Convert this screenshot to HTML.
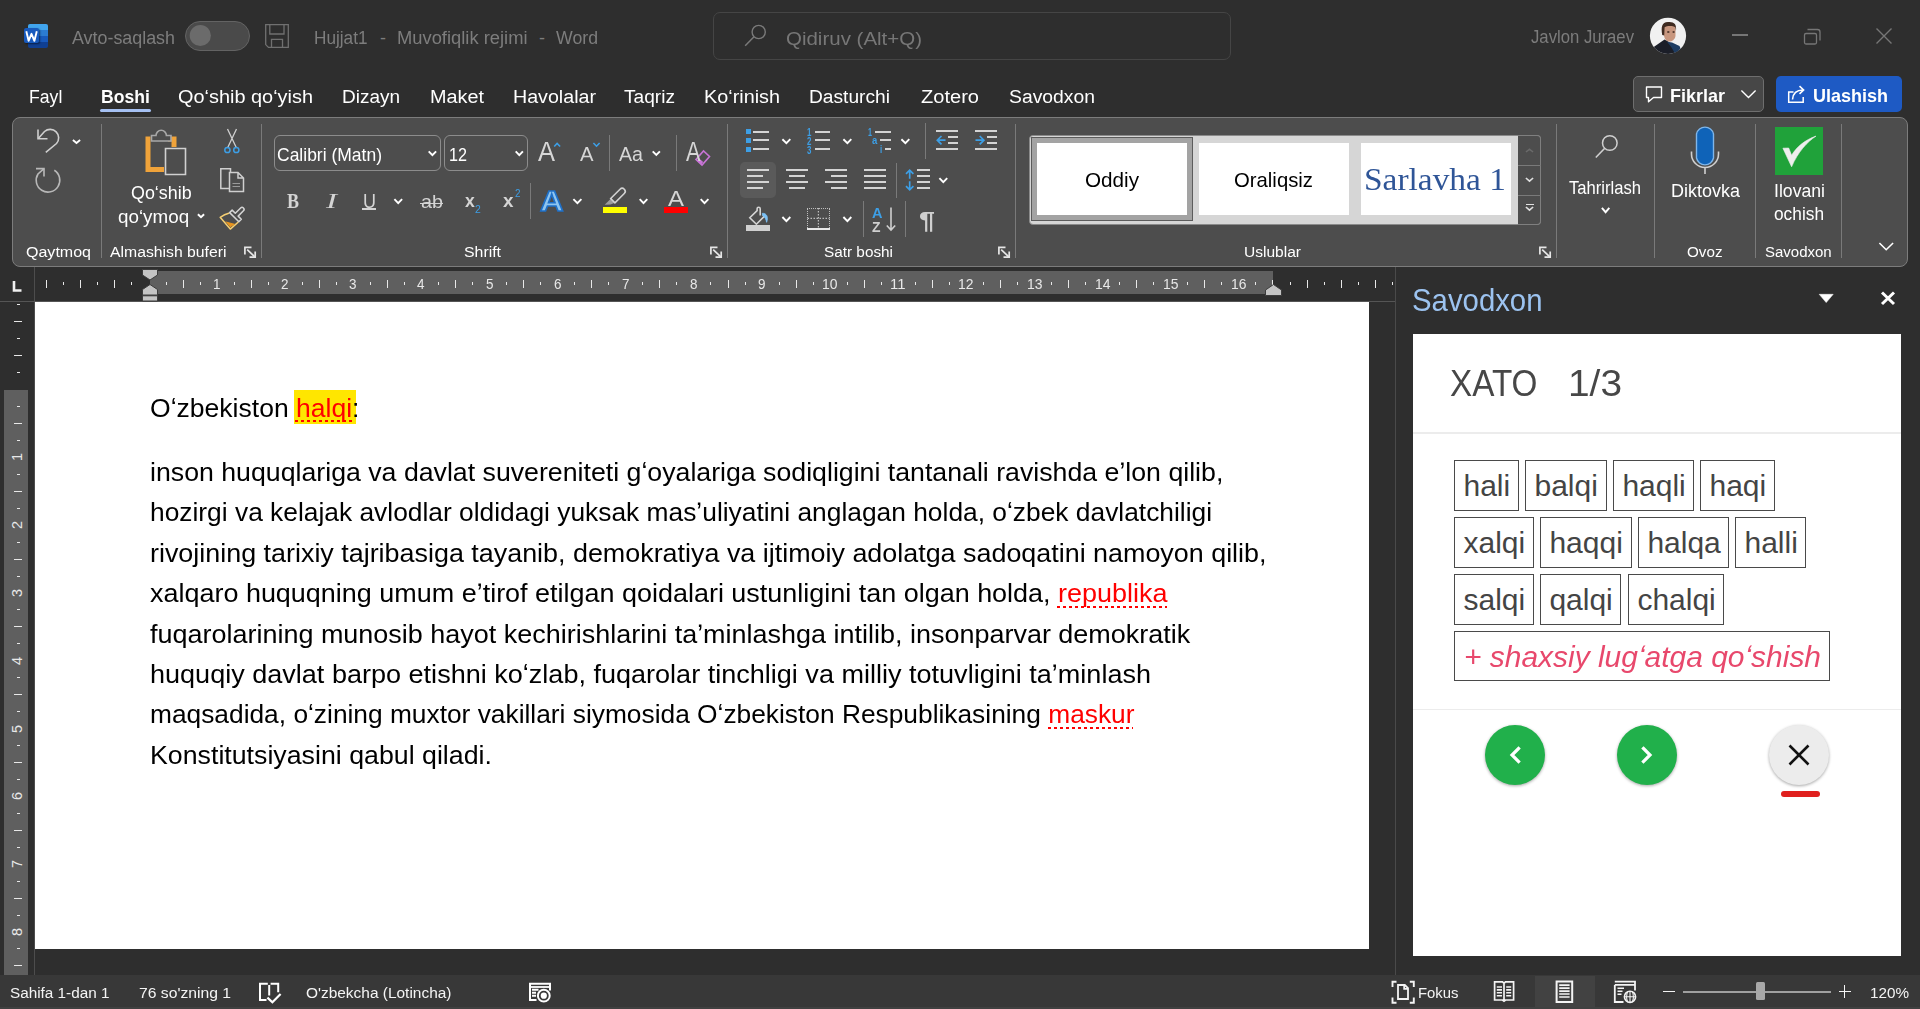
<!DOCTYPE html><html><head><meta charset="utf-8"><style>
html,body{margin:0;padding:0;width:1920px;height:1009px;overflow:hidden;background:#2e2e2e;font-family:"Liberation Sans",sans-serif;}
.a{position:absolute;box-sizing:border-box;}
.t{position:absolute;white-space:nowrap;line-height:1;transform-origin:0 0;}
svg{position:absolute;overflow:visible;}
</style></head><body>
<div class="a" style="left:100px;top:109px;width:51px;height:3px;background:#a5c0f2;border-radius:2px;"></div>
<div class="a" style="left:1633px;top:76px;width:131px;height:36px;background:#474747;border:1px solid #6e6e6e;border-radius:5px;"></div>
<div class="a" style="left:1776px;top:76px;width:126px;height:36px;background:#1e5ac4;border-radius:5px;"></div>
<div class="a" style="left:12px;top:117px;width:1896px;height:150px;background:#4d4d4d;border:1px solid #7c7c7c;border-radius:8px;"></div>
<div class="a" style="left:35px;top:270px;width:1360px;height:24px;background:#2e2e2e;"></div>
<div class="a" style="left:150px;top:271px;width:1123px;height:23px;background:#5f5f5f;"></div>
<div class="a" style="left:34px;top:267px;width:1px;height:35px;background:#4d4d4d;"></div>
<div class="a" style="left:0px;top:301px;width:1395px;height:1px;background:#555;"></div>
<div class="a" style="left:1395px;top:267px;width:1px;height:708px;background:#4a4a4a;"></div>
<div class="a" style="left:4px;top:390px;width:24px;height:585px;background:#5f5f5f;"></div>
<div class="a" style="left:34px;top:302px;width:1px;height:673px;background:#4d4d4d;"></div>
<div class="a" style="left:35px;top:302px;width:1334px;height:647px;background:#ffffff;"></div>
<div class="a" style="left:294px;top:390px;width:62px;height:34px;background:#ffe600;"></div>
<div class="a" style="left:295px;top:419.5px;width:58px;height:2.5px;background:repeating-linear-gradient(90deg,#f00 0 3px,transparent 3px 6px);"></div>
<div class="a" style="left:1057px;top:605.5px;width:110px;height:2.5px;background:repeating-linear-gradient(90deg,#f00 0 3px,transparent 3px 6px);"></div>
<div class="a" style="left:1047.5px;top:726.5px;width:85.5px;height:2.5px;background:repeating-linear-gradient(90deg,#f00 0 3px,transparent 3px 6px);"></div>
<div class="a" style="left:1413px;top:334px;width:488px;height:622px;background:#ffffff;"></div>
<div class="a" style="left:0px;top:975px;width:1920px;height:34px;background:#383838;"></div>
<div class="a" style="left:0px;top:1007px;width:1920px;height:2px;background:#414141;"></div>
<div class="a" style="left:101px;top:124px;width:1px;height:134px;background:#7a7a7a;"></div>
<div class="a" style="left:261px;top:124px;width:1px;height:134px;background:#7a7a7a;"></div>
<div class="a" style="left:727px;top:124px;width:1px;height:134px;background:#7a7a7a;"></div>
<div class="a" style="left:1015px;top:124px;width:1px;height:134px;background:#7a7a7a;"></div>
<div class="a" style="left:1556px;top:124px;width:1px;height:134px;background:#7a7a7a;"></div>
<div class="a" style="left:1654px;top:124px;width:1px;height:134px;background:#7a7a7a;"></div>
<div class="a" style="left:1755px;top:124px;width:1px;height:134px;background:#7a7a7a;"></div>
<div class="a" style="left:1841px;top:124px;width:1px;height:134px;background:#7a7a7a;"></div>
<div class="a" style="left:274px;top:135px;width:167px;height:36px;border:1px solid #8c8c8c;border-radius:6px;"></div>
<div class="a" style="left:444px;top:135px;width:84px;height:36px;border:1px solid #8c8c8c;border-radius:6px;"></div>
<div class="a" style="left:609px;top:135px;width:1px;height:36px;background:#7a7a7a;"></div>
<div class="a" style="left:676px;top:135px;width:1px;height:36px;background:#7a7a7a;"></div>
<div class="a" style="left:690px;top:140px;width:30px;height:30px;"></div>
<div class="a" style="left:362px;top:208.3px;width:14px;height:2px;background:#d4d4d4;"></div>
<div class="a" style="left:419.5px;top:202.5px;width:23.5px;height:1.6px;background:#d4d4d4;"></div>
<div class="a" style="left:530px;top:183px;width:1px;height:36px;background:#7a7a7a;"></div>
<div class="a" style="left:602.8px;top:206.6px;width:24.5px;height:6.3px;background:#ffff00;"></div>
<div class="a" style="left:664px;top:206.6px;width:24px;height:6.3px;background:#ff0000;"></div>
<div class="a" style="left:746px;top:129.0px;width:5px;height:5px;background:#3d9fe6;"></div>
<div class="a" style="left:753.2px;top:130.5px;width:15.6px;height:2px;background:#d4d4d4;"></div>
<div class="a" style="left:746px;top:137.8px;width:5px;height:5px;background:#3d9fe6;"></div>
<div class="a" style="left:753.2px;top:139.3px;width:15.6px;height:2px;background:#d4d4d4;"></div>
<div class="a" style="left:746px;top:146.8px;width:5px;height:5px;background:#3d9fe6;"></div>
<div class="a" style="left:753.2px;top:148.3px;width:15.6px;height:2px;background:#d4d4d4;"></div>
<div class="a" style="left:814.5px;top:130.5px;width:15.3px;height:2px;background:#d4d4d4;"></div>
<div class="a" style="left:814.5px;top:139.3px;width:15.3px;height:2px;background:#d4d4d4;"></div>
<div class="a" style="left:814.5px;top:148.3px;width:15.3px;height:2px;background:#d4d4d4;"></div>
<div class="a" style="left:875.3px;top:130.5px;width:15.5px;height:2px;background:#d4d4d4;"></div>
<div class="a" style="left:880px;top:139.3px;width:10.8px;height:2px;background:#d4d4d4;"></div>
<div class="a" style="left:884.5px;top:148.3px;width:6.3px;height:2px;background:#d4d4d4;"></div>
<div class="a" style="left:925px;top:123px;width:1px;height:36px;background:#7a7a7a;"></div>
<div class="a" style="left:936.3px;top:130px;width:21.5px;height:2px;background:#d4d4d4;"></div>
<div class="a" style="left:947.9px;top:136px;width:9.899999999999977px;height:2px;background:#d4d4d4;"></div>
<div class="a" style="left:947.9px;top:142px;width:9.899999999999977px;height:2px;background:#d4d4d4;"></div>
<div class="a" style="left:936.3px;top:148px;width:21.5px;height:2px;background:#d4d4d4;"></div>
<div class="a" style="left:975.2px;top:130px;width:21.59999999999991px;height:2px;background:#d4d4d4;"></div>
<div class="a" style="left:987.3px;top:136px;width:9.5px;height:2px;background:#d4d4d4;"></div>
<div class="a" style="left:987.3px;top:142px;width:9.5px;height:2px;background:#d4d4d4;"></div>
<div class="a" style="left:975.2px;top:148px;width:21.59999999999991px;height:2px;background:#d4d4d4;"></div>
<div class="a" style="left:740px;top:162px;width:35.5px;height:36px;background:#5a5a5a;border-radius:5px;"></div>
<div class="a" style="left:747.1px;top:169.1px;width:21.699999999999932px;height:2px;background:#d4d4d4;"></div>
<div class="a" style="left:747.1px;top:175.1px;width:15.600000000000023px;height:2px;background:#d4d4d4;"></div>
<div class="a" style="left:747.1px;top:181.1px;width:21.699999999999932px;height:2px;background:#d4d4d4;"></div>
<div class="a" style="left:747.1px;top:187.1px;width:15.600000000000023px;height:2px;background:#d4d4d4;"></div>
<div class="a" style="left:786px;top:169.1px;width:21.600000000000023px;height:2px;background:#d4d4d4;"></div>
<div class="a" style="left:789.3px;top:175.1px;width:15.400000000000091px;height:2px;background:#d4d4d4;"></div>
<div class="a" style="left:786px;top:181.1px;width:21.600000000000023px;height:2px;background:#d4d4d4;"></div>
<div class="a" style="left:789.3px;top:187.1px;width:15.400000000000091px;height:2px;background:#d4d4d4;"></div>
<div class="a" style="left:825.1px;top:169.1px;width:21.799999999999955px;height:2px;background:#d4d4d4;"></div>
<div class="a" style="left:831.3px;top:175.1px;width:15.600000000000023px;height:2px;background:#d4d4d4;"></div>
<div class="a" style="left:825.1px;top:181.1px;width:21.799999999999955px;height:2px;background:#d4d4d4;"></div>
<div class="a" style="left:831.3px;top:187.1px;width:15.600000000000023px;height:2px;background:#d4d4d4;"></div>
<div class="a" style="left:864.1px;top:169.1px;width:21.799999999999955px;height:2px;background:#d4d4d4;"></div>
<div class="a" style="left:864.1px;top:175.1px;width:21.799999999999955px;height:2px;background:#d4d4d4;"></div>
<div class="a" style="left:864.1px;top:181.1px;width:21.799999999999955px;height:2px;background:#d4d4d4;"></div>
<div class="a" style="left:864.1px;top:187.1px;width:21.799999999999955px;height:2px;background:#d4d4d4;"></div>
<div class="a" style="left:896px;top:162.5px;width:1px;height:35.5px;background:#7a7a7a;"></div>
<div class="a" style="left:916.6px;top:169.1px;width:13.399999999999977px;height:2px;background:#d4d4d4;"></div>
<div class="a" style="left:916.6px;top:175.1px;width:13.399999999999977px;height:2px;background:#d4d4d4;"></div>
<div class="a" style="left:916.6px;top:181.1px;width:13.399999999999977px;height:2px;background:#d4d4d4;"></div>
<div class="a" style="left:916.6px;top:187.1px;width:13.399999999999977px;height:2px;background:#d4d4d4;"></div>
<div class="a" style="left:746px;top:225.3px;width:24px;height:5.3px;background:#d0d0d0;"></div>
<div class="a" style="left:807px;top:207.5px;width:22.8px;height:22px;border:1.2px dotted #bdbdbd;border-bottom:none;"></div>
<div class="a" style="left:806.9px;top:228px;width:23px;height:2px;background:#e8e8e8;"></div>
<div class="a" style="left:862.5px;top:201px;width:1px;height:36px;background:#7a7a7a;"></div>
<div class="a" style="left:905px;top:201px;width:1px;height:36px;background:#7a7a7a;"></div>
<div class="a" style="left:1029px;top:134.5px;width:512px;height:90.5px;background:#d6d6d6;border:1px solid #8a8a8a;border-radius:4px;"></div>
<div class="a" style="left:1518px;top:135px;width:23px;height:90px;background:#4d4d4d;border:1px solid #7f7f7f;border-left:none;border-radius:0 4px 4px 0;"></div>
<div class="a" style="left:1518px;top:165px;width:23px;height:1px;background:#7a7a7a;"></div>
<div class="a" style="left:1518px;top:194.5px;width:23px;height:1px;background:#7a7a7a;"></div>
<div class="a" style="left:1525.5px;top:203.5px;width:8.5px;height:1.6px;background:#e0e0e0;"></div>
<div class="a" style="left:1031px;top:137px;width:161.5px;height:83.5px;background:#ffffff;border:1px solid #5c5c5c;box-shadow:inset 0 0 0 5px #a3a3a3;"></div>
<div class="a" style="left:1199px;top:143px;width:150px;height:72px;background:#ffffff;"></div>
<div class="a" style="left:1361px;top:143px;width:150.3px;height:72px;background:#ffffff;"></div>
<div class="a" style="left:1775px;top:127px;width:48px;height:48px;background:#20a23a;"></div>
<div class="a" style="left:28.4px;top:23.9px;width:19.6px;height:23.9px;border-radius:2px;background:linear-gradient(#41a5ee 0,#41a5ee 25%,#2b7cd3 25%,#2b7cd3 51%,#185abd 51%,#185abd 76%,#103f91 76%);"></div>
<div class="a" style="left:24.1px;top:28.4px;width:15px;height:15.1px;background:#185abd;border-radius:2px;box-shadow:1px 1px 2px rgba(0,0,0,.5);"></div>
<div class="a" style="left:185px;top:21px;width:65px;height:30px;background:#4a4a4a;border:1.5px solid #636363;border-radius:15px;"></div>
<div class="a" style="left:713px;top:12px;width:518px;height:48px;border:1px solid #454545;border-radius:7px;background:#2e2e2e;"></div>
<div class="a" style="left:1732px;top:34.3px;width:15.6px;height:1.4px;background:#767676;"></div>
<div class="a" style="left:46px;top:279.5px;width:1.2px;height:8px;background:#e8e8e8;"></div>
<div class="a" style="left:63px;top:281.5px;width:1.2px;height:3.5px;background:#e8e8e8;"></div>
<div class="a" style="left:80px;top:279.5px;width:1.2px;height:8px;background:#e8e8e8;"></div>
<div class="a" style="left:97px;top:281.5px;width:1.2px;height:3.5px;background:#e8e8e8;"></div>
<div class="a" style="left:114px;top:279.5px;width:1.2px;height:8px;background:#e8e8e8;"></div>
<div class="a" style="left:131px;top:281.5px;width:1.2px;height:3.5px;background:#e8e8e8;"></div>
<div class="a" style="left:166px;top:281.5px;width:1.2px;height:3.5px;background:#e8e8e8;"></div>
<div class="a" style="left:183px;top:279.5px;width:1.2px;height:8px;background:#e8e8e8;"></div>
<div class="a" style="left:200px;top:281.5px;width:1.2px;height:3.5px;background:#e8e8e8;"></div>
<div class="a" style="left:234px;top:281.5px;width:1.2px;height:3.5px;background:#e8e8e8;"></div>
<div class="a" style="left:251px;top:279.5px;width:1.2px;height:8px;background:#e8e8e8;"></div>
<div class="a" style="left:268px;top:281.5px;width:1.2px;height:3.5px;background:#e8e8e8;"></div>
<div class="a" style="left:302px;top:281.5px;width:1.2px;height:3.5px;background:#e8e8e8;"></div>
<div class="a" style="left:319px;top:279.5px;width:1.2px;height:8px;background:#e8e8e8;"></div>
<div class="a" style="left:336px;top:281.5px;width:1.2px;height:3.5px;background:#e8e8e8;"></div>
<div class="a" style="left:370px;top:281.5px;width:1.2px;height:3.5px;background:#e8e8e8;"></div>
<div class="a" style="left:387px;top:279.5px;width:1.2px;height:8px;background:#e8e8e8;"></div>
<div class="a" style="left:404px;top:281.5px;width:1.2px;height:3.5px;background:#e8e8e8;"></div>
<div class="a" style="left:438px;top:281.5px;width:1.2px;height:3.5px;background:#e8e8e8;"></div>
<div class="a" style="left:455px;top:279.5px;width:1.2px;height:8px;background:#e8e8e8;"></div>
<div class="a" style="left:472px;top:281.5px;width:1.2px;height:3.5px;background:#e8e8e8;"></div>
<div class="a" style="left:506px;top:281.5px;width:1.2px;height:3.5px;background:#e8e8e8;"></div>
<div class="a" style="left:523px;top:279.5px;width:1.2px;height:8px;background:#e8e8e8;"></div>
<div class="a" style="left:540px;top:281.5px;width:1.2px;height:3.5px;background:#e8e8e8;"></div>
<div class="a" style="left:574px;top:281.5px;width:1.2px;height:3.5px;background:#e8e8e8;"></div>
<div class="a" style="left:591px;top:279.5px;width:1.2px;height:8px;background:#e8e8e8;"></div>
<div class="a" style="left:608px;top:281.5px;width:1.2px;height:3.5px;background:#e8e8e8;"></div>
<div class="a" style="left:642px;top:281.5px;width:1.2px;height:3.5px;background:#e8e8e8;"></div>
<div class="a" style="left:659px;top:279.5px;width:1.2px;height:8px;background:#e8e8e8;"></div>
<div class="a" style="left:676px;top:281.5px;width:1.2px;height:3.5px;background:#e8e8e8;"></div>
<div class="a" style="left:710px;top:281.5px;width:1.2px;height:3.5px;background:#e8e8e8;"></div>
<div class="a" style="left:728px;top:279.5px;width:1.2px;height:8px;background:#e8e8e8;"></div>
<div class="a" style="left:745px;top:281.5px;width:1.2px;height:3.5px;background:#e8e8e8;"></div>
<div class="a" style="left:779px;top:281.5px;width:1.2px;height:3.5px;background:#e8e8e8;"></div>
<div class="a" style="left:796px;top:279.5px;width:1.2px;height:8px;background:#e8e8e8;"></div>
<div class="a" style="left:813px;top:281.5px;width:1.2px;height:3.5px;background:#e8e8e8;"></div>
<div class="a" style="left:847px;top:281.5px;width:1.2px;height:3.5px;background:#e8e8e8;"></div>
<div class="a" style="left:864px;top:279.5px;width:1.2px;height:8px;background:#e8e8e8;"></div>
<div class="a" style="left:881px;top:281.5px;width:1.2px;height:3.5px;background:#e8e8e8;"></div>
<div class="a" style="left:915px;top:281.5px;width:1.2px;height:3.5px;background:#e8e8e8;"></div>
<div class="a" style="left:932px;top:279.5px;width:1.2px;height:8px;background:#e8e8e8;"></div>
<div class="a" style="left:949px;top:281.5px;width:1.2px;height:3.5px;background:#e8e8e8;"></div>
<div class="a" style="left:983px;top:281.5px;width:1.2px;height:3.5px;background:#e8e8e8;"></div>
<div class="a" style="left:1000px;top:279.5px;width:1.2px;height:8px;background:#e8e8e8;"></div>
<div class="a" style="left:1017px;top:281.5px;width:1.2px;height:3.5px;background:#e8e8e8;"></div>
<div class="a" style="left:1051px;top:281.5px;width:1.2px;height:3.5px;background:#e8e8e8;"></div>
<div class="a" style="left:1068px;top:279.5px;width:1.2px;height:8px;background:#e8e8e8;"></div>
<div class="a" style="left:1085px;top:281.5px;width:1.2px;height:3.5px;background:#e8e8e8;"></div>
<div class="a" style="left:1119px;top:281.5px;width:1.2px;height:3.5px;background:#e8e8e8;"></div>
<div class="a" style="left:1136px;top:279.5px;width:1.2px;height:8px;background:#e8e8e8;"></div>
<div class="a" style="left:1153px;top:281.5px;width:1.2px;height:3.5px;background:#e8e8e8;"></div>
<div class="a" style="left:1187px;top:281.5px;width:1.2px;height:3.5px;background:#e8e8e8;"></div>
<div class="a" style="left:1204px;top:279.5px;width:1.2px;height:8px;background:#e8e8e8;"></div>
<div class="a" style="left:1221px;top:281.5px;width:1.2px;height:3.5px;background:#e8e8e8;"></div>
<div class="a" style="left:1255px;top:281.5px;width:1.2px;height:3.5px;background:#e8e8e8;"></div>
<div class="a" style="left:1272px;top:279.5px;width:1.2px;height:8px;background:#e8e8e8;"></div>
<div class="a" style="left:1290px;top:281.5px;width:1.2px;height:3.5px;background:#e8e8e8;"></div>
<div class="a" style="left:1307px;top:279.5px;width:1.2px;height:8px;background:#e8e8e8;"></div>
<div class="a" style="left:1324px;top:281.5px;width:1.2px;height:3.5px;background:#e8e8e8;"></div>
<div class="a" style="left:1341px;top:279.5px;width:1.2px;height:8px;background:#e8e8e8;"></div>
<div class="a" style="left:1358px;top:281.5px;width:1.2px;height:3.5px;background:#e8e8e8;"></div>
<div class="a" style="left:1375px;top:279.5px;width:1.2px;height:8px;background:#e8e8e8;"></div>
<div class="a" style="left:1392px;top:281.5px;width:1.2px;height:3.5px;background:#e8e8e8;"></div>
<div class="a" style="left:16.8px;top:304px;width:3.5px;height:1.2px;background:#e8e8e8;"></div>
<div class="a" style="left:14px;top:321px;width:8px;height:1.2px;background:#e8e8e8;"></div>
<div class="a" style="left:16.8px;top:338px;width:3.5px;height:1.2px;background:#e8e8e8;"></div>
<div class="a" style="left:14px;top:355px;width:8px;height:1.2px;background:#e8e8e8;"></div>
<div class="a" style="left:16.8px;top:372px;width:3.5px;height:1.2px;background:#e8e8e8;"></div>
<div class="a" style="left:16.8px;top:406px;width:3.5px;height:1.2px;background:#e8e8e8;"></div>
<div class="a" style="left:14px;top:423px;width:8px;height:1.2px;background:#e8e8e8;"></div>
<div class="a" style="left:16.8px;top:440px;width:3.5px;height:1.2px;background:#e8e8e8;"></div>
<div class="t" style="left:10px;top:450.4px;width:14px;height:14px;font-size:14.5px;color:#e8e8e8;line-height:14px;text-align:center;transform:rotate(-90deg);transform-origin:7px 7px;">1</div>
<div class="a" style="left:16.8px;top:474px;width:3.5px;height:1.2px;background:#e8e8e8;"></div>
<div class="a" style="left:14px;top:491px;width:8px;height:1.2px;background:#e8e8e8;"></div>
<div class="a" style="left:16.8px;top:508px;width:3.5px;height:1.2px;background:#e8e8e8;"></div>
<div class="t" style="left:10px;top:518.2px;width:14px;height:14px;font-size:14.5px;color:#e8e8e8;line-height:14px;text-align:center;transform:rotate(-90deg);transform-origin:7px 7px;">2</div>
<div class="a" style="left:16.8px;top:542px;width:3.5px;height:1.2px;background:#e8e8e8;"></div>
<div class="a" style="left:14px;top:559px;width:8px;height:1.2px;background:#e8e8e8;"></div>
<div class="a" style="left:16.8px;top:576px;width:3.5px;height:1.2px;background:#e8e8e8;"></div>
<div class="t" style="left:10px;top:586.0px;width:14px;height:14px;font-size:14.5px;color:#e8e8e8;line-height:14px;text-align:center;transform:rotate(-90deg);transform-origin:7px 7px;">3</div>
<div class="a" style="left:16.8px;top:609px;width:3.5px;height:1.2px;background:#e8e8e8;"></div>
<div class="a" style="left:14px;top:626px;width:8px;height:1.2px;background:#e8e8e8;"></div>
<div class="a" style="left:16.8px;top:643px;width:3.5px;height:1.2px;background:#e8e8e8;"></div>
<div class="t" style="left:10px;top:653.8px;width:14px;height:14px;font-size:14.5px;color:#e8e8e8;line-height:14px;text-align:center;transform:rotate(-90deg);transform-origin:7px 7px;">4</div>
<div class="a" style="left:16.8px;top:677px;width:3.5px;height:1.2px;background:#e8e8e8;"></div>
<div class="a" style="left:14px;top:694px;width:8px;height:1.2px;background:#e8e8e8;"></div>
<div class="a" style="left:16.8px;top:711px;width:3.5px;height:1.2px;background:#e8e8e8;"></div>
<div class="t" style="left:10px;top:721.6px;width:14px;height:14px;font-size:14.5px;color:#e8e8e8;line-height:14px;text-align:center;transform:rotate(-90deg);transform-origin:7px 7px;">5</div>
<div class="a" style="left:16.8px;top:745px;width:3.5px;height:1.2px;background:#e8e8e8;"></div>
<div class="a" style="left:14px;top:762px;width:8px;height:1.2px;background:#e8e8e8;"></div>
<div class="a" style="left:16.8px;top:779px;width:3.5px;height:1.2px;background:#e8e8e8;"></div>
<div class="t" style="left:10px;top:789.4px;width:14px;height:14px;font-size:14.5px;color:#e8e8e8;line-height:14px;text-align:center;transform:rotate(-90deg);transform-origin:7px 7px;">6</div>
<div class="a" style="left:16.8px;top:813px;width:3.5px;height:1.2px;background:#e8e8e8;"></div>
<div class="a" style="left:14px;top:830px;width:8px;height:1.2px;background:#e8e8e8;"></div>
<div class="a" style="left:16.8px;top:847px;width:3.5px;height:1.2px;background:#e8e8e8;"></div>
<div class="t" style="left:10px;top:857.2px;width:14px;height:14px;font-size:14.5px;color:#e8e8e8;line-height:14px;text-align:center;transform:rotate(-90deg);transform-origin:7px 7px;">7</div>
<div class="a" style="left:16.8px;top:881px;width:3.5px;height:1.2px;background:#e8e8e8;"></div>
<div class="a" style="left:14px;top:898px;width:8px;height:1.2px;background:#e8e8e8;"></div>
<div class="a" style="left:16.8px;top:915px;width:3.5px;height:1.2px;background:#e8e8e8;"></div>
<div class="t" style="left:10px;top:925.0px;width:14px;height:14px;font-size:14.5px;color:#e8e8e8;line-height:14px;text-align:center;transform:rotate(-90deg);transform-origin:7px 7px;">8</div>
<div class="a" style="left:16.8px;top:948px;width:3.5px;height:1.2px;background:#e8e8e8;"></div>
<div class="a" style="left:14px;top:965px;width:8px;height:1.2px;background:#e8e8e8;"></div>
<div class="a" style="left:1413px;top:432px;width:488px;height:1.5px;background:#ececec;"></div>
<div class="a" style="left:1454.2px;top:460.2px;width:64.59999999999991px;height:50.5px;border:1.2px solid #4a4a4a;background:#fff;"></div>
<div class="a" style="left:1525.2px;top:460.2px;width:81.59999999999991px;height:50.5px;border:1.2px solid #4a4a4a;background:#fff;"></div>
<div class="a" style="left:1613.1px;top:460.2px;width:80.5px;height:50.5px;border:1.2px solid #4a4a4a;background:#fff;"></div>
<div class="a" style="left:1700.2px;top:460.2px;width:74.39999999999986px;height:50.5px;border:1.2px solid #4a4a4a;background:#fff;"></div>
<div class="a" style="left:1454.2px;top:517.1px;width:79.5px;height:50.5px;border:1.2px solid #4a4a4a;background:#fff;"></div>
<div class="a" style="left:1540.1px;top:517.1px;width:91.60000000000014px;height:50.5px;border:1.2px solid #4a4a4a;background:#fff;"></div>
<div class="a" style="left:1638.1px;top:517.1px;width:90.70000000000005px;height:50.5px;border:1.2px solid #4a4a4a;background:#fff;"></div>
<div class="a" style="left:1735.2px;top:517.1px;width:70.5px;height:50.5px;border:1.2px solid #4a4a4a;background:#fff;"></div>
<div class="a" style="left:1454.2px;top:574px;width:79.5px;height:50.5px;border:1.2px solid #4a4a4a;background:#fff;"></div>
<div class="a" style="left:1540.1px;top:574px;width:81.30000000000018px;height:50.5px;border:1.2px solid #4a4a4a;background:#fff;"></div>
<div class="a" style="left:1628.1px;top:574px;width:95.70000000000005px;height:50.5px;border:1.2px solid #4a4a4a;background:#fff;"></div>
<div class="a" style="left:1454.2px;top:631.2px;width:375.8px;height:50.3px;border:1.2px solid #4a4a4a;background:#fff;"></div>
<div class="a" style="left:1413px;top:708.5px;width:488px;height:1.5px;background:#ececec;"></div>
<div class="a" style="left:1781.3px;top:791.3px;width:39px;height:5.3px;background:#e0201e;border-radius:3px;"></div>
<div class="a" style="left:1535px;top:976px;width:60px;height:31px;background:#424242;"></div>
<div class="a" style="left:1662.8px;top:991px;width:12px;height:1.4px;background:#f4f4f4;"></div>
<div class="a" style="left:1683.3px;top:990.6px;width:147.7px;height:2.1px;background:#a0a0a0;"></div>
<div class="a" style="left:1756.2px;top:982.4px;width:9.2px;height:17.8px;background:#a8a8a8;border-radius:1.5px;"></div>
<div class="a" style="left:1838.5px;top:991px;width:12.3px;height:1.4px;background:#f4f4f4;"></div>
<div class="a" style="left:1843.95px;top:985.4px;width:1.4px;height:12.3px;background:#f4f4f4;"></div><svg style="left:0;top:0" width="1920" height="1009" viewBox="0 0 1920 1009"><path d="M244.9,254.5 V247.4 H251.5" stroke="#e6e6e6" stroke-width="1.7" fill="none" /><path d="M247.2,249.7 L254.8,256.8" stroke="#e6e6e6" stroke-width="1.7" fill="none" /><path d="M249.5,257.1 H255.2 V251.5" stroke="#e6e6e6" stroke-width="1.7" fill="none" /><path d="M710.9,254.5 V247.4 H717.5" stroke="#e6e6e6" stroke-width="1.7" fill="none" /><path d="M713.2,249.7 L720.8,256.8" stroke="#e6e6e6" stroke-width="1.7" fill="none" /><path d="M715.5,257.1 H721.2 V251.5" stroke="#e6e6e6" stroke-width="1.7" fill="none" /><path d="M998.9,254.5 V247.4 H1005.5" stroke="#e6e6e6" stroke-width="1.7" fill="none" /><path d="M1001.2,249.7 L1008.8,256.8" stroke="#e6e6e6" stroke-width="1.7" fill="none" /><path d="M1003.5,257.1 H1009.2 V251.5" stroke="#e6e6e6" stroke-width="1.7" fill="none" /><path d="M1539.9,254.5 V247.4 H1546.5" stroke="#e6e6e6" stroke-width="1.7" fill="none" /><path d="M1542.2,249.7 L1549.8,256.8" stroke="#e6e6e6" stroke-width="1.7" fill="none" /><path d="M1544.5,257.1 H1550.2 V251.5" stroke="#e6e6e6" stroke-width="1.7" fill="none" /><path d="M1879.4,243.0 L1886.2,249.7 L1893.1,243.0" stroke="#ffffff" stroke-width="1.6" fill="none" stroke-linecap="butt" stroke-linejoin="miter"/><path d="M38,129.5 V138.7 H47.5" stroke="#cfcfcf" stroke-width="1.6" fill="none" /><path d="M38.5,138.2 L44.5,131.5 A8.5,8.5 0 0 1 56.5,143.5 L45.8,152.4" stroke="#cfcfcf" stroke-width="1.6" fill="none" /><path d="M72.9,140.0 L76.5,143.0 L80.1,140.0" stroke="#ffffff" stroke-width="1.9" fill="none" stroke-linecap="butt" stroke-linejoin="miter"/><path d="M54.3,170.3 A11.8,11.8 0 1 1 38,174 L44,168.6" stroke="#b8b8b8" stroke-width="1.6" fill="none" /><path d="M36,168.6 H44 V176.6" stroke="#b8b8b8" stroke-width="1.6" fill="none" /><path d="M150.5,139 H148 V169.5 H164" stroke="#f0a33a" stroke-width="5" fill="none" /><path d="M168,139 H174 V147" stroke="#f0a33a" stroke-width="5" fill="none" /><path d="M151.5,141 V135.5 H156 A5.2,5.2 0 0 1 166.4,135.5 H171 V141 Z" stroke="#a8a8a8" stroke-width="1.6" fill="#4d4d4d" /><path d="M165.5,148.5 H185.5 V174.5 H165.5 Z" stroke="#d0d0d0" stroke-width="1.6" fill="none" /><path d="M197.9,214.2 L201.0,217.2 L204.1,214.2" stroke="#ffffff" stroke-width="1.9" fill="none" stroke-linecap="butt" stroke-linejoin="miter"/><path d="M227.5,129 L236.5,148 M236.5,129 L227.5,148" stroke="#cfcfcf" stroke-width="1.3" fill="none" /><circle cx="227.4" cy="150" r="2.6" stroke="#3d9fe6" stroke-width="1.5" fill="none"/><circle cx="236.3" cy="150" r="2.6" stroke="#3d9fe6" stroke-width="1.5" fill="none"/><path d="M230.5,172 V168.8 H220.8 V188.5 H229" stroke="#cfcfcf" stroke-width="1.5" fill="none" /><path d="M229.5,172.5 H238 L243.5,178 V191.5 H229.5 Z M238,172.5 V178 H243.5" stroke="#cfcfcf" stroke-width="1.5" fill="none" /><path d="M232.5,183.5 H240 M232.5,186.5 H240" stroke="#9a9a9a" stroke-width="1.2" fill="none" /><g transform="translate(234.25,217.2) rotate(45)"><path d="M-6.3,0.5 Q-9,5 -9.9,10 L5.6,11.2 L6.3,0.5" stroke="#f5cf73" stroke-width="1.5" fill="none" stroke-linejoin="round"/><path d="M-1.9,8.9 L4.9,5.1 L3.9,9.5 Z" fill="#e8951f" stroke="#e8951f" stroke-width="1"/><path d="M-6.5,0 H6.5 V-3.5 H2 V-11 A2,2 0 0 0 -2,-11 V-3.5 H-6.5 Z" stroke="#d4d4d4" stroke-width="1.5" fill="none" stroke-linejoin="round"/></g><path d="M428.7,151.3 L432.4,155.2 L436.1,151.3" stroke="#ffffff" stroke-width="1.9" fill="none" stroke-linecap="butt" stroke-linejoin="miter"/><path d="M515.7,151.3 L519.3,155.2 L522.9,151.3" stroke="#ffffff" stroke-width="1.9" fill="none" stroke-linecap="butt" stroke-linejoin="miter"/><path d="M554.2,146.5 L557.1,143.4 L560.1,146.5" stroke="#3d9fe6" stroke-width="1.6" fill="none" stroke-linecap="butt" stroke-linejoin="miter"/><path d="M593.4,143.0 L596.5,146.2 L599.6,143.0" stroke="#3d9fe6" stroke-width="1.6" fill="none" stroke-linecap="butt" stroke-linejoin="miter"/><path d="M652.7,151.3 L656.3,155.0 L659.9,151.3" stroke="#ffffff" stroke-width="1.9" fill="none" stroke-linecap="butt" stroke-linejoin="miter"/><path d="M696,159.5 L703.5,151 L709.5,156.5 L702,165 Z" stroke="#c874d6" stroke-width="1.6" fill="#4d4d4d" /><path d="M697.8,159.5 L702.2,163.3" stroke="#c874d6" stroke-width="3.2" fill="none" /><path d="M394.4,199.2 L398.2,203.2 L402.1,199.2" stroke="#ffffff" stroke-width="1.9" fill="none" stroke-linecap="butt" stroke-linejoin="miter"/><path d="M573.4,199.2 L577.4,203.2 L581.4,199.2" stroke="#ffffff" stroke-width="1.9" fill="none" stroke-linecap="butt" stroke-linejoin="miter"/><g transform="translate(616.5,197) rotate(45)"><path d="M-2.9,5.2 L2.9,5.2 L1.2,9.5 L-2.9,13.8 Z" fill="#9c9c9c"/><path d="M-3,5.2 V-8 A3,3 0 0 1 3,-8 V5.2 Z" stroke="#d2d2d2" stroke-width="1.6" fill="none"/></g><path d="M639.7,199.2 L643.5,203.2 L647.3,199.2" stroke="#ffffff" stroke-width="1.9" fill="none" stroke-linecap="butt" stroke-linejoin="miter"/><path d="M700.7,199.2 L704.5,203.2 L708.4,199.2" stroke="#ffffff" stroke-width="1.9" fill="none" stroke-linecap="butt" stroke-linejoin="miter"/><path d="M782.4,139.2 L786.4,143.1 L790.3,139.2" stroke="#ffffff" stroke-width="1.9" fill="none" stroke-linecap="butt" stroke-linejoin="miter"/><path d="M843.4,139.2 L847.4,143.1 L851.3,139.2" stroke="#ffffff" stroke-width="1.9" fill="none" stroke-linecap="butt" stroke-linejoin="miter"/><path d="M901.4,139.2 L905.4,143.1 L909.3,139.2" stroke="#ffffff" stroke-width="1.9" fill="none" stroke-linecap="butt" stroke-linejoin="miter"/><path d="M945.5,140.2 H937.5 M941.5,136 L937.3,140.2 L941.5,144.4" stroke="#3d9fe6" stroke-width="1.7" fill="none" /><path d="M975.5,140.2 H983.7 M979.7,136 L983.9,140.2 L979.7,144.4" stroke="#3d9fe6" stroke-width="1.7" fill="none" /><path d="M909.7,170.5 V178.8 M909.7,181.2 V189.5 M906,173.8 L909.7,170.1 L913.4,173.8 M906,186.2 L909.7,189.9 L913.4,186.2" stroke="#3d9fe6" stroke-width="1.7" fill="none" /><path d="M939.4,178.2 L943.3,182.2 L947.2,178.2" stroke="#ffffff" stroke-width="1.9" fill="none" stroke-linecap="butt" stroke-linejoin="miter"/><path d="M760.2,215.5 V208.8 A1.55,1.55 0 0 0 757.1,208.8 V210.6 L749.8,217.7 L756.4,224.2 L764.2,216.4 L762.8,215" stroke="#d4d4d4" stroke-width="1.6" fill="none" /><path d="M762.3,213.3 C766.8,213 768.6,217.5 766.6,222.3 C766.2,219.2 764.8,216.8 762.6,215.4 Z" stroke="#7cc2f6" stroke-width="0.8" fill="#7cc2f6" /><path d="M782.4,217.0 L786.4,221.1 L790.3,217.0" stroke="#ffffff" stroke-width="1.9" fill="none" stroke-linecap="butt" stroke-linejoin="miter"/><path d="M818.4,208 V228 M807.5,218.3 H829.5" stroke="#bdbdbd" stroke-width="1.2" fill="none" stroke-dasharray="1.5 1.5"/><path d="M843.4,217.0 L847.4,221.1 L851.3,217.0" stroke="#ffffff" stroke-width="1.9" fill="none" stroke-linecap="butt" stroke-linejoin="miter"/><path d="M891,207.5 V230 M886.8,225.5 L891,230 L895.2,225.5" stroke="#cfcfcf" stroke-width="1.6" fill="none" /><path d="M1525.9,152.0 L1529.5,149.3 L1533.1,152.0" stroke="#6a6a6a" stroke-width="1.5" fill="none" stroke-linecap="butt" stroke-linejoin="miter"/><path d="M1525.9,178.0 L1529.5,181.2 L1533.1,178.0" stroke="#e0e0e0" stroke-width="1.6" fill="none" stroke-linecap="butt" stroke-linejoin="miter"/><path d="M1525.9,207.0 L1529.5,210.2 L1533.1,207.0" stroke="#e0e0e0" stroke-width="1.6" fill="none" stroke-linecap="butt" stroke-linejoin="miter"/><circle cx="1609.8" cy="143" r="7.3" stroke="#d0d0d0" stroke-width="1.5" fill="none"/><path d="M1604.5,148.5 L1595.8,157.5" stroke="#d0d0d0" stroke-width="1.6" fill="none" /><path d="M1601.9,207.8 L1605.6,212.2 L1609.3,207.8" stroke="#ffffff" stroke-width="1.9" fill="none" stroke-linecap="butt" stroke-linejoin="miter"/><path d="M1696.5,158 V134 A8.7,8.7 0 0 1 1713.5,134 V158 A8.7,8.7 0 0 1 1696.5,158 Z" stroke="#7fb6ea" stroke-width="1.4" fill="#0f63b8" /><path d="M1691.5,151.5 V154 A13.5,13.5 0 0 0 1718.5,154 V151.5 M1705,167.5 V174" stroke="#d0d0d0" stroke-width="1.6" fill="none" /><path d="M1782.9,148.2 L1788.7,148 L1791.6,155.2 C1797,146.5 1805,140 1816,136.1 C1807,142 1798,152 1791.6,166.8 Z" stroke="#eeeeee" stroke-width="0.6" fill="#eeeeee" /><path d="M26.3,31.3 L28.6,40.8 L31.5,33.8 L34.4,40.8 L36.8,31.3" stroke="#ffffff" stroke-width="1.9" fill="none" stroke-linejoin="round"/><circle cx="200.3" cy="35.5" r="10.6" fill="#6b6b6b"/><path d="M265.7,24.6 H288.3 V47.4 H268.5 L265.7,44.6 Z M269.8,24.6 V34 H284 V24.6 M271.5,47.4 V39.4 H282.5 V47.4" stroke="#707070" stroke-width="1.3" fill="none" /><circle cx="758.7" cy="32" r="6.6" stroke="#7a7a7a" stroke-width="1.4" fill="none"/><path d="M754,36.8 L745.2,45.8" stroke="#7a7a7a" stroke-width="1.5" fill="none" /><defs><clipPath id="av"><circle cx="1668" cy="35.8" r="18.1"/></clipPath></defs><g clip-path="url(#av)"><rect x="1649" y="17" width="38" height="38" fill="#f1f1f1"/><path d="M1664,27 C1664,24.5 1675.5,24 1675.5,27.5 L1675.5,36 C1675,40 1671,42 1668.5,41.5 C1666,41 1664,38 1664,35 Z" fill="#c8977f"/><path d="M1649,57 L1653,47.5 L1664.5,39.5 L1668,41.5 L1672,44.5 L1680,51 L1683,57 Z" fill="#1b1e28"/><path d="M1667,41.8 L1672,42.5 L1679.5,46 L1681.5,51 L1677,57 L1671.5,47.5 Z" fill="#1d3c62"/><path d="M1662.2,35 C1661,27 1661.5,22.5 1668,22 C1674,21.5 1676.8,24 1676,31 L1675.3,27.3 C1673,25.6 1667,25.6 1664.6,27.2 L1664.2,35.5 Z" fill="#3e2a20"/><ellipse cx="1668.3" cy="32" rx="1.3" ry="0.8" fill="#2a1a14"/><ellipse cx="1673.6" cy="32" rx="1.2" ry="0.8" fill="#2a1a14"/></g><path d="M1806,33.5 H1815 A1.5,1.5 0 0 1 1816.5,35 V42.5 A1.5,1.5 0 0 1 1815,44 H1806 A1.5,1.5 0 0 1 1804.5,42.5 V35 A1.5,1.5 0 0 1 1806,33.5 Z" stroke="#767676" stroke-width="1.3" fill="none" /><path d="M1807.5,29.5 H1817.5 A2.5,2.5 0 0 1 1820,32 V40.5" stroke="#767676" stroke-width="1.3" fill="none" /><path d="M1876.5,28.5 L1891.5,43.5 M1891.5,28.5 L1876.5,43.5" stroke="#767676" stroke-width="1.4" fill="none" /><path d="M1646.5,87 H1661.5 V97.5 H1653.5 L1648.5,101.8 V97.5 H1646.5 Z" stroke="#ffffff" stroke-width="1.4" fill="none" stroke-linejoin="round"/><path d="M1741.4,90.5 L1748.5,97.4 L1755.6,90.5" stroke="#ffffff" stroke-width="1.4" fill="none" stroke-linecap="butt" stroke-linejoin="miter"/><path d="M1793.5,92 H1788.7 V102.2 H1803.2 V97" stroke="#ffffff" stroke-width="1.5" fill="none" /><path d="M1792.5,99.5 C1793,93 1796.5,90 1803,90 M1799.5,86.2 L1803.6,90 L1799.5,93.8" stroke="#ffffff" stroke-width="1.6" fill="none" /><path d="M142.5,269.5 H157.5 V275 L150,280 L142.5,275 Z" stroke="#3c3c3c" stroke-width="1" fill="#c4c4c4" /><path d="M150,284.5 L157.5,289.5 V295 H142.5 V289.5 Z" stroke="#3c3c3c" stroke-width="1" fill="#c4c4c4" /><path d="M142.5,295.8 H157.5 V301 H142.5 Z" stroke="#3c3c3c" stroke-width="1" fill="#c4c4c4" /><path d="M1273.5,284.5 L1281.5,290 V295.5 H1265.5 V290 Z" stroke="#3c3c3c" stroke-width="1" fill="#c4c4c4" /><path d="M14,281 V290.5 H21.5" stroke="#f0f0f0" stroke-width="2.6" fill="none" /><path d="M1819.2,294.3 H1833.2 L1826.2,302.6 Z" stroke="#ffffff" stroke-width="0.5" fill="#ffffff" /><path d="M1882,292.5 L1894,304 M1894,292.5 L1882,304" stroke="#ffffff" stroke-width="3" fill="none" /><circle cx="1515" cy="755" r="30" fill="#21b04b" style="filter:drop-shadow(0 1px 1.5px rgba(0,0,0,.35))"/><circle cx="1647" cy="755" r="30" fill="#21b04b" style="filter:drop-shadow(0 1px 1.5px rgba(0,0,0,.35))"/><circle cx="1799" cy="755" r="30" fill="#ececec" style="filter:drop-shadow(0 1px 1.5px rgba(0,0,0,.35))"/><path d="M1518.5,748.5 L1512,755 L1518.5,761.5" stroke="#ffffff" stroke-width="3.2" fill="none" stroke-linecap="square"/><path d="M1643.5,748.5 L1650,755 L1643.5,761.5" stroke="#ffffff" stroke-width="3.2" fill="none" stroke-linecap="square"/><path d="M1789.5,745.5 L1808.5,764.5 M1808.5,745.5 L1789.5,764.5" stroke="#111111" stroke-width="2.6" fill="none" /><path d="M267.8,983.8 H260 V1000.1 H266.5 M269.2,985 V995.5 M270.6,983.8 H278.2 V992.2" stroke="#ffffff" stroke-width="2" fill="none" /><path d="M267.4,997.6 L272.4,1002.3 L280.6,994" stroke="#ffffff" stroke-width="2.2" fill="none" /><path d="M536.5,1000.1 H530 V983.8 H550 V990.5" stroke="#ffffff" stroke-width="2" fill="none" /><path d="M531,987 H549" stroke="#ffffff" stroke-width="1.8" fill="none" /><path d="M532,989.8 H538.5 M532,992.8 H536 M532,995.8 H536" stroke="#ffffff" stroke-width="1.9" fill="none" /><circle cx="543.8" cy="995.7" r="5.9" stroke="#ffffff" stroke-width="2" fill="#383838"/><circle cx="543.8" cy="995.7" r="3.1" fill="#ffffff"/><path d="M1392.5,987 V981.8 H1396.5 M1409.8,981.8 H1413.8 V987 M1413.8,997.5 V1002.8 H1409.8 M1396.5,1002.8 H1392.5 V997.5" stroke="#f4f4f4" stroke-width="1.9" fill="none" /><path d="M1398,985 H1404.8 L1408,988.2 V999 H1398 Z M1404.2,985 V988.8 H1408" stroke="#f4f4f4" stroke-width="1.8" fill="none" /><path d="M1494.6,981.8 H1502.5 L1504,983.3 L1505.5,981.8 H1513.6 V1000 H1505.5 L1504,1001.2 L1502.5,1000 H1494.6 Z M1504,983.3 V1000" stroke="#f4f4f4" stroke-width="1.7" fill="none" /><path d="M1496.8,987 H1502 M1496.8,989.9 H1502 M1496.8,992.8 H1502 M1496.8,995.7 H1502 M1506.2,987 H1511.2 M1506.2,989.9 H1511.2 M1506.2,992.8 H1511.2 M1506.2,995.7 H1511.2" stroke="#f4f4f4" stroke-width="1.6" fill="none" /><path d="M1556.6,981.6 H1572.2 V1002 H1556.6 Z" stroke="#f4f4f4" stroke-width="2" fill="none" /><path d="M1559.2,985.2 H1569.6 M1559.2,988.2 H1569.6 M1559.2,991.1 H1569.6 M1559.2,994 H1569.6 M1559.2,997 H1569.6" stroke="#f4f4f4" stroke-width="1.7" fill="none" /><path d="M1614.8,985 V1002 H1623.5 M1614.8,981.6 H1635 V990.5 M1614.8,984.8 H1635" stroke="#f4f4f4" stroke-width="1.8" fill="none" /><path d="M1617.5,988.2 H1624 M1617.5,991.2 H1622.5 M1617.5,994.2 H1621.5" stroke="#f4f4f4" stroke-width="1.6" fill="none" /><circle cx="1630" cy="996.8" r="5.6" stroke="#f4f4f4" stroke-width="1.6" fill="#383838"/><path d="M1624.4,996.8 H1635.6 M1630,991.2 V1002.4 M1627.6,991.6 Q1625.6,996.8 1627.6,1002 M1632.4,991.6 Q1634.4,996.8 1632.4,1002" stroke="#f4f4f4" stroke-width="1.1" fill="none" /></svg><div id="t0" class="t" style="left:72.0px;top:28.56px;font-size:18.00px;color:#7d7d7d;font-weight:normal;font-style:normal;font-family:&quot;Liberation Sans&quot;, sans-serif;transform:scaleX(0.9929);">Avto-saqlash</div>
<div id="t1" class="t" style="left:313.5px;top:28.56px;font-size:18.00px;color:#7d7d7d;font-weight:normal;font-style:normal;font-family:&quot;Liberation Sans&quot;, sans-serif;transform:scaleX(0.9548);">Hujjat1</div>
<div id="t2" class="t" style="left:380.0px;top:28.56px;font-size:18.00px;color:#7d7d7d;font-weight:normal;font-style:normal;font-family:&quot;Liberation Sans&quot;, sans-serif;">-</div>
<div id="t3" class="t" style="left:397.0px;top:28.56px;font-size:18.00px;color:#7d7d7d;font-weight:normal;font-style:normal;font-family:&quot;Liberation Sans&quot;, sans-serif;transform:scaleX(1.0193);">Muvofiqlik rejimi</div>
<div id="t4" class="t" style="left:539.0px;top:28.56px;font-size:18.00px;color:#7d7d7d;font-weight:normal;font-style:normal;font-family:&quot;Liberation Sans&quot;, sans-serif;">-</div>
<div id="t5" class="t" style="left:555.5px;top:28.56px;font-size:18.00px;color:#7d7d7d;font-weight:normal;font-style:normal;font-family:&quot;Liberation Sans&quot;, sans-serif;transform:scaleX(0.9839);">Word</div>
<div id="t6" class="t" style="left:786.0px;top:29.56px;font-size:18.00px;color:#777777;font-weight:normal;font-style:normal;font-family:&quot;Liberation Sans&quot;, sans-serif;transform:scaleX(1.1378);">Qidiruv (Alt+Q)</div>
<div id="t7" class="t" style="left:1530.5px;top:27.86px;font-size:18.00px;color:#7c7c7c;font-weight:normal;font-style:normal;font-family:&quot;Liberation Sans&quot;, sans-serif;transform:scaleX(0.9274);">Javlon Juraev</div>
<div id="t8" class="t" style="left:29.4px;top:87.25px;font-size:19.20px;color:#ffffff;font-weight:normal;font-style:normal;font-family:&quot;Liberation Sans&quot;, sans-serif;transform:scaleX(0.9186);">Fayl</div>
<div id="t9" class="t" style="left:100.8px;top:87.25px;font-size:19.20px;color:#ffffff;font-weight:bold;font-style:normal;font-family:&quot;Liberation Sans&quot;, sans-serif;transform:scaleX(0.9154);">Boshi</div>
<div id="t10" class="t" style="left:178.0px;top:87.25px;font-size:19.20px;color:#ffffff;font-weight:normal;font-style:normal;font-family:&quot;Liberation Sans&quot;, sans-serif;transform:scaleX(1.0375);">Qoʻshib qoʻyish</div>
<div id="t11" class="t" style="left:342.0px;top:87.25px;font-size:19.20px;color:#ffffff;font-weight:normal;font-style:normal;font-family:&quot;Liberation Sans&quot;, sans-serif;transform:scaleX(0.9888);">Dizayn</div>
<div id="t12" class="t" style="left:430.0px;top:87.25px;font-size:19.20px;color:#ffffff;font-weight:normal;font-style:normal;font-family:&quot;Liberation Sans&quot;, sans-serif;transform:scaleX(1.0332);">Maket</div>
<div id="t13" class="t" style="left:513.0px;top:87.25px;font-size:19.20px;color:#ffffff;font-weight:normal;font-style:normal;font-family:&quot;Liberation Sans&quot;, sans-serif;transform:scaleX(1.0239);">Havolalar</div>
<div id="t14" class="t" style="left:624.0px;top:87.25px;font-size:19.20px;color:#ffffff;font-weight:normal;font-style:normal;font-family:&quot;Liberation Sans&quot;, sans-serif;transform:scaleX(0.9963);">Taqriz</div>
<div id="t15" class="t" style="left:704.0px;top:87.25px;font-size:19.20px;color:#ffffff;font-weight:normal;font-style:normal;font-family:&quot;Liberation Sans&quot;, sans-serif;transform:scaleX(1.0327);">Koʻrinish</div>
<div id="t16" class="t" style="left:809.0px;top:87.25px;font-size:19.20px;color:#ffffff;font-weight:normal;font-style:normal;font-family:&quot;Liberation Sans&quot;, sans-serif;transform:scaleX(0.9994);">Dasturchi</div>
<div id="t17" class="t" style="left:921.0px;top:87.25px;font-size:19.20px;color:#ffffff;font-weight:normal;font-style:normal;font-family:&quot;Liberation Sans&quot;, sans-serif;transform:scaleX(1.0456);">Zotero</div>
<div id="t18" class="t" style="left:1009.0px;top:87.25px;font-size:19.20px;color:#ffffff;font-weight:normal;font-style:normal;font-family:&quot;Liberation Sans&quot;, sans-serif;transform:scaleX(1.0077);">Savodxon</div>
<div id="t19" class="t" style="left:1669.5px;top:85.62px;font-size:19.00px;color:#ffffff;font-weight:bold;font-style:normal;font-family:&quot;Liberation Sans&quot;, sans-serif;transform:scaleX(0.9467);">Fikrlar</div>
<div id="t20" class="t" style="left:1812.5px;top:85.62px;font-size:19.00px;color:#ffffff;font-weight:bold;font-style:normal;font-family:&quot;Liberation Sans&quot;, sans-serif;transform:scaleX(0.9469);">Ulashish</div>
<div id="t21" class="t" style="left:149.5px;top:394.69px;font-size:26.00px;color:#000;font-weight:normal;font-style:normal;font-family:&quot;Liberation Sans&quot;, sans-serif;transform:scaleX(1.0207);">Oʻzbekiston <span style="color:#ff0000">halqi</span>:</div>
<div id="t22" class="t" style="left:149.5px;top:458.99px;font-size:26.00px;color:#000;font-weight:normal;font-style:normal;font-family:&quot;Liberation Sans&quot;, sans-serif;transform:scaleX(1.0271);">inson huquqlariga va davlat suvereniteti gʻoyalariga sodiqligini tantanali ravishda eʼlon qilib,</div>
<div id="t23" class="t" style="left:149.5px;top:499.39px;font-size:26.00px;color:#000;font-weight:normal;font-style:normal;font-family:&quot;Liberation Sans&quot;, sans-serif;transform:scaleX(1.0136);">hozirgi va kelajak avlodlar oldidagi yuksak masʼuliyatini anglagan holda, oʻzbek davlatchiligi</div>
<div id="t24" class="t" style="left:149.5px;top:539.79px;font-size:26.00px;color:#000;font-weight:normal;font-style:normal;font-family:&quot;Liberation Sans&quot;, sans-serif;transform:scaleX(1.0342);">rivojining tarixiy tajribasiga tayanib, demokratiya va ijtimoiy adolatga sadoqatini namoyon qilib,</div>
<div id="t25" class="t" style="left:149.5px;top:580.19px;font-size:26.00px;color:#000;font-weight:normal;font-style:normal;font-family:&quot;Liberation Sans&quot;, sans-serif;transform:scaleX(1.0367);">xalqaro huquqning umum eʼtirof etilgan qoidalari ustunligini tan olgan holda, <span style="color:#ff0000">republika</span></div>
<div id="t26" class="t" style="left:149.5px;top:620.59px;font-size:26.00px;color:#000;font-weight:normal;font-style:normal;font-family:&quot;Liberation Sans&quot;, sans-serif;transform:scaleX(1.0372);">fuqarolarining munosib hayot kechirishlarini taʼminlashga intilib, insonparvar demokratik</div>
<div id="t27" class="t" style="left:149.5px;top:660.99px;font-size:26.00px;color:#000;font-weight:normal;font-style:normal;font-family:&quot;Liberation Sans&quot;, sans-serif;transform:scaleX(1.0400);">huquqiy davlat barpo etishni koʻzlab, fuqarolar tinchligi va milliy totuvligini taʼminlash</div>
<div id="t28" class="t" style="left:149.5px;top:701.39px;font-size:26.00px;color:#000;font-weight:normal;font-style:normal;font-family:&quot;Liberation Sans&quot;, sans-serif;transform:scaleX(1.0123);">maqsadida, oʻzining muxtor vakillari siymosida Oʻzbekiston Respublikasining <span style="color:#ff0000">maskur</span></div>
<div id="t29" class="t" style="left:149.5px;top:741.79px;font-size:26.00px;color:#000;font-weight:normal;font-style:normal;font-family:&quot;Liberation Sans&quot;, sans-serif;transform:scaleX(1.0285);">Konstitutsiyasini qabul qiladi.</div>
<div id="t30" class="t" style="left:1412.0px;top:283.51px;font-size:32.00px;color:#9cc3f0;font-weight:normal;font-style:normal;font-family:&quot;Liberation Sans&quot;, sans-serif;transform:scaleX(0.9169);">Savodxon</div>
<div id="t31" class="t" style="left:26.0px;top:244.38px;font-size:15.50px;color:#ffffff;font-weight:normal;font-style:normal;font-family:&quot;Liberation Sans&quot;, sans-serif;transform:scaleX(1.0335);">Qaytmoq</div>
<div id="t32" class="t" style="left:110.0px;top:243.78px;font-size:15.50px;color:#ffffff;font-weight:normal;font-style:normal;font-family:&quot;Liberation Sans&quot;, sans-serif;transform:scaleX(1.0168);">Almashish buferi</div>
<div id="t33" class="t" style="left:463.5px;top:243.78px;font-size:15.50px;color:#ffffff;font-weight:normal;font-style:normal;font-family:&quot;Liberation Sans&quot;, sans-serif;transform:scaleX(1.0225);">Shrift</div>
<div id="t34" class="t" style="left:824.4px;top:243.88px;font-size:15.50px;color:#ffffff;font-weight:normal;font-style:normal;font-family:&quot;Liberation Sans&quot;, sans-serif;transform:scaleX(0.9886);">Satr boshi</div>
<div id="t35" class="t" style="left:1244.0px;top:243.68px;font-size:15.50px;color:#ffffff;font-weight:normal;font-style:normal;font-family:&quot;Liberation Sans&quot;, sans-serif;transform:scaleX(1.0025);">Uslublar</div>
<div id="t36" class="t" style="left:1686.5px;top:244.38px;font-size:15.50px;color:#ffffff;font-weight:normal;font-style:normal;font-family:&quot;Liberation Sans&quot;, sans-serif;transform:scaleX(0.9810);">Ovoz</div>
<div id="t37" class="t" style="left:1764.6px;top:244.38px;font-size:15.50px;color:#ffffff;font-weight:normal;font-style:normal;font-family:&quot;Liberation Sans&quot;, sans-serif;transform:scaleX(0.9673);">Savodxon</div>
<div id="t38" class="t" style="left:131.4px;top:183.64px;font-size:18.50px;color:#ffffff;font-weight:normal;font-style:normal;font-family:&quot;Liberation Sans&quot;, sans-serif;transform:scaleX(0.9660);">Qoʻshib</div>
<div id="t39" class="t" style="left:117.7px;top:208.14px;font-size:18.50px;color:#ffffff;font-weight:normal;font-style:normal;font-family:&quot;Liberation Sans&quot;, sans-serif;transform:scaleX(1.0166);">qoʻymoq</div>
<div id="t40" class="t" style="left:277.4px;top:144.62px;font-size:19.00px;color:#ffffff;font-weight:normal;font-style:normal;font-family:&quot;Liberation Sans&quot;, sans-serif;transform:scaleX(0.9208);">Calibri (Matn)</div>
<div id="t41" class="t" style="left:448.8px;top:145.22px;font-size:19.00px;color:#ffffff;font-weight:normal;font-style:normal;font-family:&quot;Liberation Sans&quot;, sans-serif;transform:scaleX(0.8514);">12</div>
<div id="t42" class="t" style="left:538.0px;top:138.74px;font-size:27.00px;color:#d6d6d6;font-weight:normal;font-style:normal;font-family:&quot;Liberation Sans&quot;, sans-serif;transform:scaleX(0.9436);">A</div>
<div id="t43" class="t" style="left:579.5px;top:144.25px;font-size:20.50px;color:#d6d6d6;font-weight:normal;font-style:normal;font-family:&quot;Liberation Sans&quot;, sans-serif;transform:scaleX(0.9863);">A</div>
<div id="t44" class="t" style="left:619.3px;top:144.25px;font-size:20.50px;color:#d6d6d6;font-weight:normal;font-style:normal;font-family:&quot;Liberation Sans&quot;, sans-serif;transform:scaleX(0.9570);">Aa</div>
<div id="t45" class="t" style="left:685.7px;top:138.74px;font-size:27.00px;color:#d6d6d6;font-weight:normal;font-style:normal;font-family:&quot;Liberation Sans&quot;, sans-serif;transform:scaleX(0.8049);">A</div>
<div id="t46" class="t" style="left:286.5px;top:190.87px;font-size:20.00px;color:#d4d4d4;font-weight:bold;font-style:normal;font-family:&quot;Liberation Serif&quot;, serif;transform:scaleX(0.8993);">B</div>
<div id="t47" class="t" style="left:325.5px;top:190.87px;font-size:20.00px;color:#d4d4d4;font-weight:normal;font-style:italic;font-family:&quot;Liberation Serif&quot;, serif;transform:scaleX(1.6487);">I</div>
<div id="t48" class="t" style="left:362.5px;top:190.87px;font-size:20.00px;color:#d4d4d4;font-weight:normal;font-style:normal;font-family:&quot;Liberation Sans&quot;, sans-serif;transform:scaleX(0.8995);">U</div>
<div id="t49" class="t" style="left:420.5px;top:191.92px;font-size:19.00px;color:#d4d4d4;font-weight:normal;font-style:normal;font-family:&quot;Liberation Sans&quot;, sans-serif;transform:scaleX(1.0407);">ab</div>
<div id="t50" class="t" style="left:464.8px;top:192.59px;font-size:17.50px;color:#d4d4d4;font-weight:bold;font-style:normal;font-family:&quot;Liberation Sans&quot;, sans-serif;transform:scaleX(1.0067);">x</div>
<div id="t51" class="t" style="left:475.3px;top:203.67px;font-size:11.50px;color:#3d9fe6;font-weight:normal;font-style:normal;font-family:&quot;Liberation Sans&quot;, sans-serif;transform:scaleX(0.9054);">2</div>
<div id="t52" class="t" style="left:503.2px;top:192.59px;font-size:17.50px;color:#d4d4d4;font-weight:bold;font-style:normal;font-family:&quot;Liberation Sans&quot;, sans-serif;transform:scaleX(1.0787);">x</div>
<div id="t53" class="t" style="left:514.6px;top:187.87px;font-size:11.50px;color:#3d9fe6;font-weight:normal;font-style:normal;font-family:&quot;Liberation Sans&quot;, sans-serif;transform:scaleX(0.8585);">2</div>
<div id="t54" class="t" style="left:540.0px;top:185.60px;font-size:30.00px;color:#8ec5f0;font-weight:bold;font-style:normal;font-family:&quot;Liberation Sans&quot;, sans-serif;transform:scaleX(1.0844);-webkit-text-stroke:1.6px #1f70c8;">A</div>
<div id="t55" class="t" style="left:667.5px;top:187.55px;font-size:22.50px;color:#d6d6d6;font-weight:normal;font-style:normal;font-family:&quot;Liberation Sans&quot;, sans-serif;transform:scaleX(1.0656);">A</div>
<div id="t56" class="t" style="left:806.6px;top:126.86px;font-size:10.80px;color:#3d9fe6;font-weight:bold;font-style:normal;font-family:&quot;Liberation Sans&quot;, sans-serif;transform:scaleX(0.7314);">1</div>
<div id="t57" class="t" style="left:806.6px;top:135.66px;font-size:10.80px;color:#3d9fe6;font-weight:bold;font-style:normal;font-family:&quot;Liberation Sans&quot;, sans-serif;transform:scaleX(0.7314);">2</div>
<div id="t58" class="t" style="left:806.6px;top:144.66px;font-size:10.80px;color:#3d9fe6;font-weight:bold;font-style:normal;font-family:&quot;Liberation Sans&quot;, sans-serif;transform:scaleX(0.7314);">3</div>
<div id="t59" class="t" style="left:867.8px;top:126.86px;font-size:10.80px;color:#3d9fe6;font-weight:bold;font-style:normal;font-family:&quot;Liberation Sans&quot;, sans-serif;transform:scaleX(0.6649);">1</div>
<div id="t60" class="t" style="left:872.0px;top:135.07px;font-size:11.50px;color:#3d9fe6;font-weight:bold;font-style:normal;font-family:&quot;Liberation Sans&quot;, sans-serif;transform:scaleX(0.8273);">a</div>
<div id="t61" class="t" style="left:879.6px;top:144.49px;font-size:11.00px;color:#3d9fe6;font-weight:bold;font-style:normal;font-family:&quot;Liberation Sans&quot;, sans-serif;transform:scaleX(0.7184);">i</div>
<div id="t62" class="t" style="left:872.0px;top:206.45px;font-size:14.00px;color:#3d9fe6;font-weight:bold;font-style:normal;font-family:&quot;Liberation Sans&quot;, sans-serif;transform:scaleX(1.0370);">A</div>
<div id="t63" class="t" style="left:872.3px;top:219.55px;font-size:14.00px;color:#cfcfcf;font-weight:bold;font-style:normal;font-family:&quot;Liberation Sans&quot;, sans-serif;transform:scaleX(0.9927);">Z</div>
<div id="t64" class="t" style="left:918.5px;top:208.98px;font-size:24.00px;color:#cfcfcf;font-weight:bold;font-style:normal;font-family:&quot;Liberation Sans&quot;, sans-serif;transform:scaleX(1.1977);">¶</div>
<div id="t65" class="t" style="left:1085.0px;top:169.02px;font-size:21.00px;color:#000000;font-weight:normal;font-style:normal;font-family:&quot;Liberation Sans&quot;, sans-serif;transform:scaleX(0.9843);">Oddiy</div>
<div id="t66" class="t" style="left:1234.0px;top:169.02px;font-size:21.00px;color:#000000;font-weight:normal;font-style:normal;font-family:&quot;Liberation Sans&quot;, sans-serif;transform:scaleX(0.9671);">Oraliqsiz</div>
<div id="t67" class="t" style="left:1363.5px;top:165.18px;font-size:30.50px;color:#2f5597;font-weight:normal;font-style:normal;font-family:&quot;Liberation Serif&quot;, serif;transform:scaleX(1.0957);">Sarlavha 1</div>
<div id="t68" class="t" style="left:1569.3px;top:179.24px;font-size:18.50px;color:#ffffff;font-weight:normal;font-style:normal;font-family:&quot;Liberation Sans&quot;, sans-serif;transform:scaleX(0.8977);">Tahrirlash</div>
<div id="t69" class="t" style="left:1670.6px;top:181.64px;font-size:18.50px;color:#ffffff;font-weight:normal;font-style:normal;font-family:&quot;Liberation Sans&quot;, sans-serif;transform:scaleX(0.9725);">Diktovka</div>
<div id="t70" class="t" style="left:1773.6px;top:181.64px;font-size:18.50px;color:#ffffff;font-weight:normal;font-style:normal;font-family:&quot;Liberation Sans&quot;, sans-serif;transform:scaleX(0.9535);">Ilovani</div>
<div id="t71" class="t" style="left:1773.6px;top:205.04px;font-size:18.50px;color:#ffffff;font-weight:normal;font-style:normal;font-family:&quot;Liberation Sans&quot;, sans-serif;transform:scaleX(0.9349);">ochish</div>
<div id="t72" class="t" style="left:213.0px;top:276.83px;font-size:14.50px;color:#e8e8e8;font-weight:normal;font-style:normal;font-family:&quot;Liberation Sans&quot;, sans-serif;transform:scaleX(0.9284);">1</div>
<div id="t73" class="t" style="left:281.1px;top:276.83px;font-size:14.50px;color:#e8e8e8;font-weight:normal;font-style:normal;font-family:&quot;Liberation Sans&quot;, sans-serif;transform:scaleX(0.9284);">2</div>
<div id="t74" class="t" style="left:349.3px;top:276.83px;font-size:14.50px;color:#e8e8e8;font-weight:normal;font-style:normal;font-family:&quot;Liberation Sans&quot;, sans-serif;transform:scaleX(0.9284);">3</div>
<div id="t75" class="t" style="left:417.4px;top:276.83px;font-size:14.50px;color:#e8e8e8;font-weight:normal;font-style:normal;font-family:&quot;Liberation Sans&quot;, sans-serif;transform:scaleX(0.9284);">4</div>
<div id="t76" class="t" style="left:485.5px;top:276.83px;font-size:14.50px;color:#e8e8e8;font-weight:normal;font-style:normal;font-family:&quot;Liberation Sans&quot;, sans-serif;transform:scaleX(0.9284);">5</div>
<div id="t77" class="t" style="left:553.6px;top:276.83px;font-size:14.50px;color:#e8e8e8;font-weight:normal;font-style:normal;font-family:&quot;Liberation Sans&quot;, sans-serif;transform:scaleX(0.9284);">6</div>
<div id="t78" class="t" style="left:621.7px;top:276.83px;font-size:14.50px;color:#e8e8e8;font-weight:normal;font-style:normal;font-family:&quot;Liberation Sans&quot;, sans-serif;transform:scaleX(0.9284);">7</div>
<div id="t79" class="t" style="left:689.9px;top:276.83px;font-size:14.50px;color:#e8e8e8;font-weight:normal;font-style:normal;font-family:&quot;Liberation Sans&quot;, sans-serif;transform:scaleX(0.9284);">8</div>
<div id="t80" class="t" style="left:758.0px;top:276.83px;font-size:14.50px;color:#e8e8e8;font-weight:normal;font-style:normal;font-family:&quot;Liberation Sans&quot;, sans-serif;transform:scaleX(0.9284);">9</div>
<div id="t81" class="t" style="left:822.1px;top:276.83px;font-size:14.50px;color:#e8e8e8;font-weight:normal;font-style:normal;font-family:&quot;Liberation Sans&quot;, sans-serif;transform:scaleX(0.9603);">10</div>
<div id="t82" class="t" style="left:890.2px;top:276.83px;font-size:14.50px;color:#e8e8e8;font-weight:normal;font-style:normal;font-family:&quot;Liberation Sans&quot;, sans-serif;transform:scaleX(1.0290);">11</div>
<div id="t83" class="t" style="left:958.3px;top:276.83px;font-size:14.50px;color:#e8e8e8;font-weight:normal;font-style:normal;font-family:&quot;Liberation Sans&quot;, sans-serif;transform:scaleX(0.9603);">12</div>
<div id="t84" class="t" style="left:1026.5px;top:276.83px;font-size:14.50px;color:#e8e8e8;font-weight:normal;font-style:normal;font-family:&quot;Liberation Sans&quot;, sans-serif;transform:scaleX(0.9603);">13</div>
<div id="t85" class="t" style="left:1094.6px;top:276.83px;font-size:14.50px;color:#e8e8e8;font-weight:normal;font-style:normal;font-family:&quot;Liberation Sans&quot;, sans-serif;transform:scaleX(0.9603);">14</div>
<div id="t86" class="t" style="left:1162.7px;top:276.83px;font-size:14.50px;color:#e8e8e8;font-weight:normal;font-style:normal;font-family:&quot;Liberation Sans&quot;, sans-serif;transform:scaleX(0.9603);">15</div>
<div id="t87" class="t" style="left:1230.8px;top:276.83px;font-size:14.50px;color:#e8e8e8;font-weight:normal;font-style:normal;font-family:&quot;Liberation Sans&quot;, sans-serif;transform:scaleX(0.9603);">16</div>
<div id="t88" class="t" style="left:1449.5px;top:365.93px;font-size:36.00px;color:#474747;font-weight:normal;font-style:normal;font-family:&quot;Liberation Sans&quot;, sans-serif;transform:scaleX(0.9239);">XATO</div>
<div id="t89" class="t" style="left:1567.5px;top:365.93px;font-size:36.00px;color:#474747;font-weight:normal;font-style:normal;font-family:&quot;Liberation Sans&quot;, sans-serif;transform:scaleX(1.0790);">1/3</div>
<div id="t90" class="t" style="left:1463.5px;top:471.21px;font-size:30.00px;color:#444444;font-weight:normal;font-style:normal;font-family:&quot;Liberation Sans&quot;, sans-serif;">hali</div>
<div id="t91" class="t" style="left:1534.5px;top:471.21px;font-size:30.00px;color:#444444;font-weight:normal;font-style:normal;font-family:&quot;Liberation Sans&quot;, sans-serif;">balqi</div>
<div id="t92" class="t" style="left:1622.4px;top:471.21px;font-size:30.00px;color:#444444;font-weight:normal;font-style:normal;font-family:&quot;Liberation Sans&quot;, sans-serif;">haqli</div>
<div id="t93" class="t" style="left:1709.5px;top:471.21px;font-size:30.00px;color:#444444;font-weight:normal;font-style:normal;font-family:&quot;Liberation Sans&quot;, sans-serif;">haqi</div>
<div id="t94" class="t" style="left:1463.5px;top:528.11px;font-size:30.00px;color:#444444;font-weight:normal;font-style:normal;font-family:&quot;Liberation Sans&quot;, sans-serif;">xalqi</div>
<div id="t95" class="t" style="left:1549.4px;top:528.11px;font-size:30.00px;color:#444444;font-weight:normal;font-style:normal;font-family:&quot;Liberation Sans&quot;, sans-serif;">haqqi</div>
<div id="t96" class="t" style="left:1647.4px;top:528.11px;font-size:30.00px;color:#444444;font-weight:normal;font-style:normal;font-family:&quot;Liberation Sans&quot;, sans-serif;">halqa</div>
<div id="t97" class="t" style="left:1744.5px;top:528.11px;font-size:30.00px;color:#444444;font-weight:normal;font-style:normal;font-family:&quot;Liberation Sans&quot;, sans-serif;">halli</div>
<div id="t98" class="t" style="left:1463.5px;top:585.00px;font-size:30.00px;color:#444444;font-weight:normal;font-style:normal;font-family:&quot;Liberation Sans&quot;, sans-serif;">salqi</div>
<div id="t99" class="t" style="left:1549.4px;top:585.00px;font-size:30.00px;color:#444444;font-weight:normal;font-style:normal;font-family:&quot;Liberation Sans&quot;, sans-serif;">qalqi</div>
<div id="t100" class="t" style="left:1637.4px;top:585.00px;font-size:30.00px;color:#444444;font-weight:normal;font-style:normal;font-family:&quot;Liberation Sans&quot;, sans-serif;">chalqi</div>
<div id="t101" class="t" style="left:1464.3px;top:642.30px;font-size:30.00px;color:#e8486c;font-weight:normal;font-style:italic;font-family:&quot;Liberation Sans&quot;, sans-serif;transform:scaleX(0.9980);">+ shaxsiy lugʻatga qoʻshish</div>
<div id="t102" class="t" style="left:10.0px;top:985.45px;font-size:15.30px;color:#f4f4f4;font-weight:normal;font-style:normal;font-family:&quot;Liberation Sans&quot;, sans-serif;transform:scaleX(0.9998);">Sahifa 1-dan 1</div>
<div id="t103" class="t" style="left:138.5px;top:985.45px;font-size:15.30px;color:#f4f4f4;font-weight:normal;font-style:normal;font-family:&quot;Liberation Sans&quot;, sans-serif;transform:scaleX(1.0260);">76 so'zning 1</div>
<div id="t104" class="t" style="left:305.5px;top:985.45px;font-size:15.30px;color:#f4f4f4;font-weight:normal;font-style:normal;font-family:&quot;Liberation Sans&quot;, sans-serif;transform:scaleX(1.0099);">O'zbekcha (Lotincha)</div>
<div id="t105" class="t" style="left:1418.0px;top:985.45px;font-size:15.30px;color:#f4f4f4;font-weight:normal;font-style:normal;font-family:&quot;Liberation Sans&quot;, sans-serif;transform:scaleX(0.9722);">Fokus</div>
<div id="t106" class="t" style="left:1870.0px;top:985.25px;font-size:15.30px;color:#f4f4f4;font-weight:normal;font-style:normal;font-family:&quot;Liberation Sans&quot;, sans-serif;transform:scaleX(0.9968);">120%</div>
</body></html>
